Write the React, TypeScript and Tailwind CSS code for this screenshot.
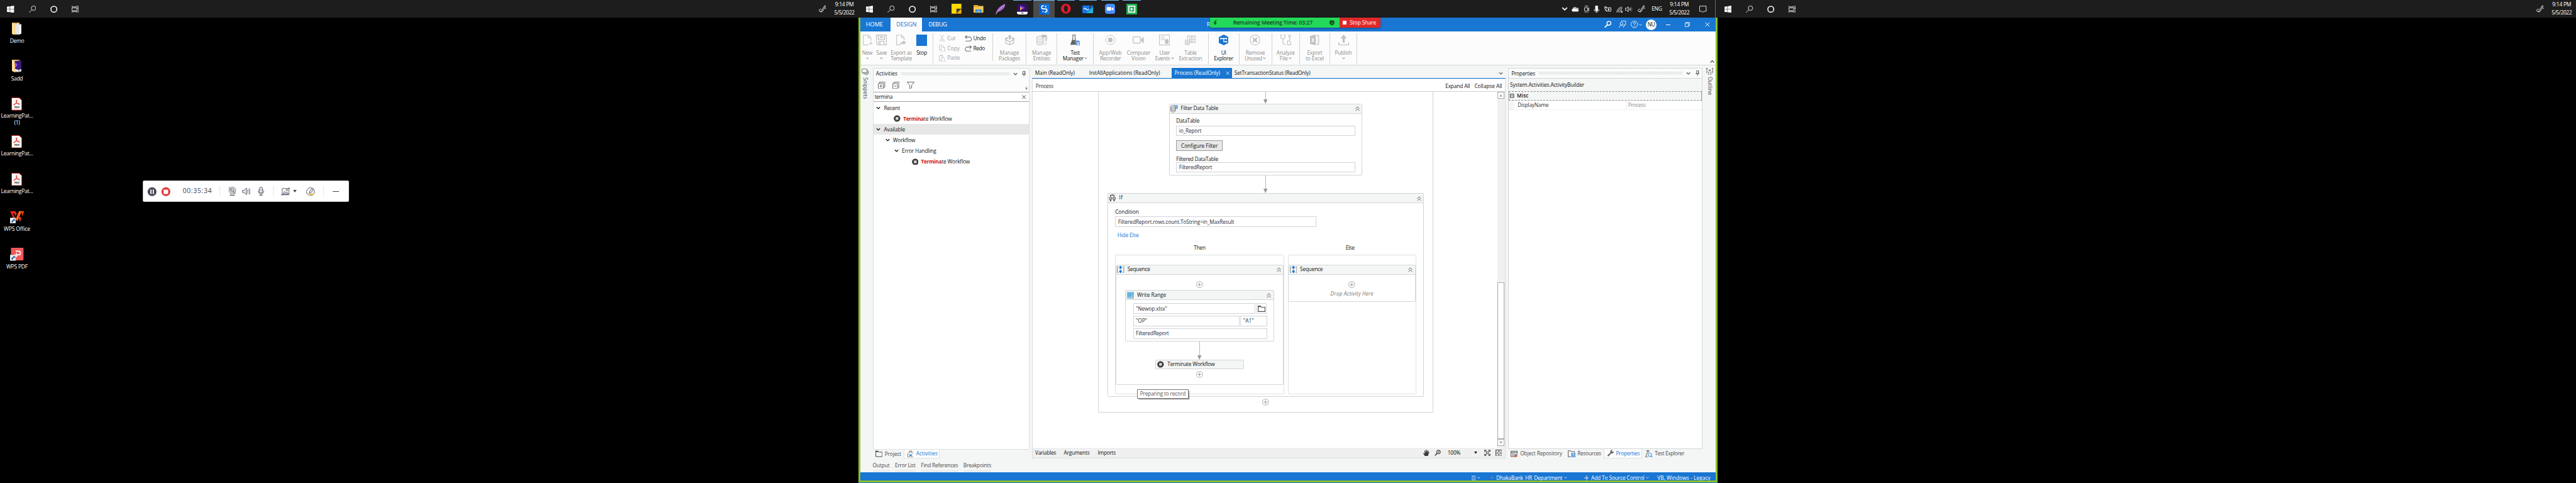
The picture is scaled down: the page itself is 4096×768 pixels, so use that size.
import React, { useLayoutEffect, useRef, useState } from "react";

type Kids = { children?: React.ReactNode };

/* Text line whose tracking is adjusted so that it spans `w` pixels. */
function Label({ w, className = "", children }: { w: number; className?: string; children: string }) {
  const ref = useRef<HTMLSpanElement>(null);
  const [spacing, setSpacing] = useState(0);
  useLayoutEffect(() => {
    const el = ref.current;
    const ctx = document.createElement("canvas").getContext("2d");
    if (!el || !ctx) return;
    const cs = getComputedStyle(el);
    ctx.font = `${cs.fontStyle} ${cs.fontWeight} ${cs.fontSize} ${cs.fontFamily}`;
    setSpacing((w - ctx.measureText(children).width) / children.length);
  }, [w, children]);
  return (
    <span ref={ref} className={`block shrink-0 whitespace-nowrap ${className}`} style={{ letterSpacing: `${spacing}px`, width: `${w}px` }}>
      {children}
    </span>
  );
}

function Icon({ w = 16, h = 16, box, className = "", children }: Kids & { w?: number; h?: number; box?: string; className?: string }) {
  return (
    <svg width={w} height={h} viewBox={box ?? `0 0 ${w} ${h}`} fill="none" stroke="currentColor" strokeWidth="1.2" className={`block shrink-0 ${className}`}>
      {children}
    </svg>
  );
}

const Chevron = ({ className = "", s = 8 }: { className?: string; s?: number }) => (
  <Icon w={s} h={s} box="0 0 8 8" className={className}>
    <path d="M1 2.5l3 3 3-3" strokeWidth="1.4" />
  </Icon>
);

const Close = ({ s = 10, className = "" }: { s?: number; className?: string }) => (
  <Icon w={s} h={s} box="0 0 10 10" className={className}>
    <path d="M.7.7l8.6 8.6M9.3.7L.7 9.3" />
  </Icon>
);

/* ---------- Taskbars ---------- */

function SystemButtons() {
  return (
    <div className="flex shrink-0 items-center gap-8 pl-4 text-white">
      <Icon>
        <path d="M0 2.3L6.5 1.4V7.6H0zM7.3 1.3L16 0V7.6H7.3zM0 8.4H6.5V14.6L0 13.7zM7.3 8.4H16V16L7.3 14.7z" fill="currentColor" stroke="none" />
      </Icon>
      <Icon>
        <circle cx="10.3" cy="5.6" r="5" />
        <path d="M6.6 9.2L.4 15.5" />
      </Icon>
      <Icon>
        <circle cx="8" cy="8" r="6.6" strokeWidth="2.2" />
      </Icon>
      <Icon>
        <path d="M.6.3v2.3h10.8V.3M.6 15.7v-2.3h10.8v2.3M.6 5h10.8v6H.6zM14.3 0v2.5M14.3 8v7.6" />
        <rect x="13" y="3.8" width="2.8" height="2.8" fill="currentColor" stroke="none" />
      </Icon>
    </div>
  );
}

const PenIcon = () => (
  <Icon w={17} h={17} className="text-white">
    <path d="M5.5 13.5L13 1.6c1-1 2.4 0 1.900 1.200L8.300 14.200l-3 1.600zM1 13c-.6-3 2-4 4.500-4M1 13c.5 2 3 2.400 4.300 1M13.500 7c2-.5 2.500 0 2.500 1.500" />
  </Icon>
);

function Clock() {
  return (
    <div className="flex w-[48px] shrink-0 flex-col items-center text-[12px] leading-[18px] text-white">
      <Label w={42}>9:14 PM</Label>
      <Label w={45}>5/5/2022</Label>
    </div>
  );
}

function SideTaskbar() {
  return (
    <div className="flex h-[40px] items-center bg-[#1d1d1d]">
      <SystemButtons />
      <div className="ml-auto flex items-center gap-[16px] pr-[8px]">
        <PenIcon />
        <Clock />
      </div>
    </div>
  );
}

function TaskApp({ state = "idle", children }: Kids & { state?: "idle" | "open" | "active" }) {
  return (
    <div className={`relative flex h-[40px] w-[48px] shrink-0 items-center justify-center ${state === "active" ? "bg-[#4b4b4b]" : ""}`}>
      {state !== "idle" && <span className={`absolute top-0 h-[2px] bg-[#76b9ed] ${state === "active" ? "w-[48px]" : "w-[40px]"}`} />}
      {children}
    </div>
  );
}

function MainTaskbar() {
  return (
    <div className="flex h-[40px] items-center bg-[#1d1d1d] text-white">
      <SystemButtons />
      <div className="ml-[19px] flex gap-[1px]">
        <TaskApp>
          <Icon w={22} h={22} className="stroke-none">
            <path d="M0 0h22v11L11 22H0z" fill="#ffd800" />
            <path d="M11 22V11h11z" fill="#3f3a38" />
            <path d="M11 22L22 11v11z" fill="#f5b400" />
          </Icon>
        </TaskApp>
        <TaskApp>
          <Icon w={22} h={18} className="stroke-none">
            <path d="M0 0h9l2 2h11v15H0z" fill="#f7c653" />
            <path d="M0 0h9l2 2-2 2H0z" fill="#e5a323" />
            <path d="M4 18v-8h14v8h-4v-4H8v4z" fill="#3a96dd" />
          </Icon>
        </TaskApp>
        <TaskApp>
          <Icon w={22} h={24} className="stroke-none">
            <path d="M0 24C2 13 9 5 22 0c-1 8-4 14-18 18.500z" fill="#a566c9" />
            <path d="M1 23C6 15 12 8 21 1" stroke="#e2c6f2" strokeWidth="1" />
          </Icon>
        </TaskApp>
        <TaskApp state="open">
          <Icon w={24} h={24} className="stroke-none">
            <rect width="24" height="24" rx="5" fill="#33125e" />
            <path d="M0 18h24v1a5 5 0 01-5 5H5a5 5 0 01-5-5z" fill="#fff" />
            <path d="M7 3l11 6-11 6z" fill="#7b3cf5" />
            <path d="M7 7l5 3-5 5z" fill="#ffab3d" />
            <path d="M9 20l1.500 2 1.500-1 1.500 1 1.500-2z" fill="#222" />
          </Icon>
        </TaskApp>
        <TaskApp state="active">
          <Icon w={24} h={24} className="stroke-none">
            <rect width="24" height="24" fill="#0b74de" />
            <path d="M0 0h12v24H0z" fill="#0a62cc" />
            <path d="M11 4.500H9.500a3.500 3.500 0 000 7h5a3.500 3.500 0 010 7H13M15 4.500v3.500M9 16v3" stroke="#fff" strokeWidth="2.400" />
          </Icon>
        </TaskApp>
        <TaskApp state="open">
          <Icon w={22} h={22} className="stroke-none">
            <path fillRule="evenodd" d="M11 0a11 11 0 100 22 11 11 0 000-22zm0 3.500c2.600 0 4.200 3.200 4.200 7.500s-1.600 7.500-4.200 7.500S6.800 15.300 6.800 11 8.400 3.500 11 3.500z" fill="#e8182c" />
          </Icon>
        </TaskApp>
        <TaskApp state="open">
          <Icon w={24} h={24} className="stroke-none">
            <rect y="4" width="24" height="17" rx="1" fill="#1474e8" />
            <path d="M24 8v12a1 1 0 01-1 1H8z" fill="#1fb3d8" />
            <path d="M3 13c2-4 4-4 5.500-1s3.500 2 6-1" stroke="#fff" strokeWidth="1.800" />
            <path d="M14 11L20 1l3 1-6 9z" fill="#333" />
          </Icon>
        </TaskApp>
        <TaskApp state="open">
          <Icon w={23} h={23} className="stroke-none">
            <rect width="23" height="23" rx="6" fill="#4a8cff" />
            <rect x="4" y="7.500" width="10" height="8" rx="2" fill="#fff" />
            <path d="M15 10.500l4-3v8l-4-3z" fill="#fff" />
          </Icon>
        </TaskApp>
        <TaskApp state="open">
          <Icon w={24} h={24} className="stroke-none">
            <rect width="24" height="24" fill="#1eaf51" />
            <rect x="4" y="4" width="16" height="16" fill="#fff" />
            <rect x="6.500" y="6.500" width="11" height="11" fill="#1eaf51" />
            <path d="M9.500 8l6 4-6 4z" fill="#fff" />
          </Icon>
        </TaskApp>
      </div>
      <div className="ml-auto flex items-center">
        <Chevron s={14} />
        <Icon className="ml-[9px] stroke-none">
          <path d="M2 13a3.300 3.300 0 010-6 5 5 0 019-2 4 4 0 013 8z" fill="#bdbdbd" />
          <path d="M2.500 13a3 3 0 01.500-5.500c3-2 5 0 6 1 2-1 5 0 6 1.500 1 1.700 0 3-1.500 3z" fill="#fff" />
        </Icon>
        <Icon className="ml-[9px]">
          <rect x="3.500" y="4.500" width="7" height="7.500" rx="1" />
          <path d="M10.500 7l2.500-2v7l-2.500-2M4 1.500c2-1 6-1 8 0M4 14.800c2 1 6 1 8 0" />
        </Icon>
        <Icon className="ml-[7px]">
          <rect x="5" y="0" width="6" height="11.500" rx="1" fill="currentColor" stroke="none" />
          <path d="M3 8v2.500c0 3 10 3 10 0V8M8 13v3M5.500 15.500h5" />
        </Icon>
        <Icon className="ml-[9px]">
          <path d="M4 4.600h10.500v7.800H5v-3M14.500 7h1.300v3h-1.300M.5 3.500h4v3L2.500 8 .5 6.500zM1.500 1.500v2M3.500 1.500v2M2.500 8v3H5" />
          <rect x="8" y="6.500" width="3" height="4" fill="currentColor" stroke="none" />
        </Icon>
        <Icon className="ml-[9px]">
          <path d="M2.500 15A13 13 0 0114.500 3M5.500 15a10 10 0 019-9M8.500 15a7 7 0 016-6M11.500 15a4 4 0 013-3" />
          <circle cx="14" cy="14" r="1.500" fill="currentColor" stroke="none" />
        </Icon>
        <Icon className="ml-[6px]">
          <path d="M.6 5.700h2.600L7 2.500v11L3.200 10.300H.6zM9 6c1 1 1 3 0 4M11 4.300c2 2 2 5.400 0 7.400" />
          <path d="M13 2.500c3 3 3 8 0 11" className="text-[#777]" />
        </Icon>
        <div className="ml-[12px]">
          <PenIcon />
        </div>
        <Label w={23} className="ml-[14px] text-[12px]">ENG</Label>
        <div className="ml-[15px]">
          <Clock />
        </div>
        <Icon className="ml-[21px] mr-[19px]">
          <path d="M.6 1h14.800v11.500H10l-2.500 2.500-2.500-2.500H.6z" />
        </Icon>
      </div>
      <div className="h-[40px] w-[1px] bg-[#6b6b6b]" />
      <div className="h-[40px] w-[4px]" />
    </div>
  );
}

/* ---------- Desktop ---------- */

function Shortcut({ w, lines, children }: Kids & { w: number; lines: string[] }) {
  return (
    <div className="flex h-[84.200px] flex-col items-center">
      <div className="flex h-[34px] items-center">{children}</div>
      <div className="mt-[3px] flex flex-col items-center text-[12px] leading-[15px] text-white">
        <Label w={w}>{lines[0]}</Label>
        {lines[1] && <Label w={13}>{lines[1]}</Label>}
      </div>
    </div>
  );
}

const Folder = ({ dark = false }: { dark?: boolean }) => (
  <Icon w={22} h={28} className="stroke-none">
    <path d="M0 0h17v26l-10 2-7-3z" fill="#e3bf6a" />
    {dark ? (
      <>
        <path d="M6 3l15-2v21l-6 6-9-5z" fill="#3b1c78" />
        <path d="M7 6l6 5-6 8z" fill="#8a4dff" />
        <path d="M6 20l9 3v5l-9-4zM16 22l5-1v5l-5 1z" fill="#f3f3f3" />
        <path d="M5 9l2 1v12l-2-2z" fill="#f39b3b" />
      </>
    ) : (
      <>
        <path d="M7 4l8-2v25l-8-2z" fill="#e6e6e6" />
        <path d="M14 5l7-2v22l-7 2z" fill="#f5f5f5" />
        <path d="M14.500 5v22" stroke="#bbb" strokeWidth=".7" />
      </>
    )}
    <path d="M0 0l6 4v23.500L0 25z" fill="#ffe09a" />
  </Icon>
);

const Pdf = () => (
  <div className="relative flex h-[29px] w-[24px] justify-center">
    <Icon w={24} h={29}>
      <path d="M2 .7h15.500L23.300 6v21a1.300 1.300 0 01-1.300 1.300H2A1.300 1.300 0 01.7 27V2A1.300 1.300 0 012 .7z" fill="#f8f8f8" stroke="#e2231a" strokeWidth="1.400" />
      <path d="M11.500 5.500c2 0 .5 5-1.500 8s-5 4.500-4.500 2.500 6-3 9-3 5 1.500 4 2.500-4-.5-5.500-2.500-3.500-7.500-1.500-7.500z" stroke="#e2231a" strokeWidth="1.300" />
    </Icon>
    <span className="absolute bottom-[2px] text-[6px] leading-[8px] font-bold text-[#222]">PDF</span>
  </div>
);

const LinkArrow = () => (
  <>
    <rect x="0" y="16" width="12.500" height="12.500" fill="#f4f4f4" stroke="#bbb" strokeWidth=".6" />
    <path d="M3 26c0-4 1.500-5 4-5.300V18.500h4v4.500l-1-1c-3 1-4 2-3.500 5z" fill="#2b62a8" />
  </>
);

function Desktop() {
  return (
    <div className="flex w-[76px] flex-col pt-[7px]">
      <Shortcut w={32} lines={["Demo"]}><Folder /></Shortcut>
      <Shortcut w={26} lines={["Sadd"]}><Folder dark /></Shortcut>
      <Shortcut w={72} lines={["LearningPat...", "(1)"]}><Pdf /></Shortcut>
      <Shortcut w={72} lines={["LearningPat..."]}><Pdf /></Shortcut>
      <Shortcut w={72} lines={["LearningPat..."]}><Pdf /></Shortcut>
      <Shortcut w={59} lines={["WPS Office"]}>
        <Icon w={32} h={29} className="stroke-none">
          <path d="M0 1h12l3 6-3 5-3-6H6l7 14-2 5z" fill="#e8261c" />
          <path d="M12 20L20 1h6l-9 22z" fill="#ff6a2b" />
          <path d="M17 8l8 9 2-5-2-11h7L22 25z" fill="#f23a14" />
          <LinkArrow />
        </Icon>
      </Shortcut>
      <Shortcut w={48} lines={["WPS PDF"]}>
        <Icon w={32} h={30} className="stroke-none">
          <rect x="2" width="28" height="28" rx="1.500" fill="#ee5a5a" />
          <path d="M14 9v-1.500h5a3.500 3.500 0 010 8.500h-9M14.500 12v9" stroke="#fff" strokeWidth="2.400" />
          <LinkArrow />
        </Icon>
      </Shortcut>
    </div>
  );
}

function RecorderBar() {
  const sep = "h-[24px] w-[1px] shrink-0 bg-[#e6e6ea]";
  return (
    <div className="mt-[364px] ml-[243px] flex h-[48px] w-[462px] items-center rounded-[3px] border border-[#c9c9d4] bg-white pl-[8px] text-[#44454f]">
      <Icon w={22} h={22} className="stroke-none">
        <circle cx="11" cy="11" r="10.300" fill="#44454f" stroke="#dfe1ee" strokeWidth="1.200" />
        <path d="M7 6h2.600v10H7zM12.400 6H15v10h-2.600z" fill="#fff" />
      </Icon>
      <Icon w={22} h={22} className="ml-[10px] stroke-none">
        <circle cx="11" cy="11" r="10.300" fill="#e03434" stroke="#dfe1ee" strokeWidth="1.200" />
        <rect x="6" y="6.500" width="10" height="9.500" rx="1" fill="#fff" />
      </Icon>
      <Label w={66} className="ml-[26px] text-[15px]">00:35:34</Label>
      <div className={`ml-[16px] ${sep}`} />
      <Icon w={18} h={20} className="ml-[19px]">
        <circle cx="9" cy="8" r="7.300" />
        <circle cx="9" cy="8" r="4" fill="#e4e7f3" />
        <path d="M1 1l16 15M5.500 16v3h7v-3M3.500 19h11" />
      </Icon>
      <Icon w={19} h={18} className="ml-[13px]">
        <path d="M1 6.500h3.500L10 1.500v15L4.500 11.500H1z" fill="#e4e7f3" />
        <path d="M12 6c1.500 2 1.500 4 0 6M14 3.500c3 3 3 8 0 11M16 2c3.500 4 3.500 10 0 14" />
      </Icon>
      <Icon w={14} h={20} className="ml-[16px]">
        <rect x="3" y="1" width="8" height="13" rx="4" fill="#e4e7f3" />
        <path d="M.7 9c0 9.500 12.600 9.500 12.600 0M7 16v3M3 19h8M3 7h3M8 7h3" />
      </Icon>
      <div className={`ml-[20px] ${sep}`} />
      <Icon w={20} h={18} className="ml-[18px]">
        <path d="M0 16.500h17.500V0M20 2.500H2.500V18" />
        <path d="M4 15l4-6 3 3.500 2-2 3 4.500z" fill="#e4e7f3" />
        <circle cx="13" cy="6" r="1.800" />
      </Icon>
      <Icon w={8} h={6} className="ml-[6px] stroke-none">
        <path d="M0 0h8L4 5.500z" fill="currentColor" />
      </Icon>
      <Icon w={19} h={19} className="ml-[22px]">
        <circle cx="9.500" cy="9.500" r="8.800" />
        <path d="M8 15.500h9" stroke="#f5a800" strokeWidth="2.400" />
        <path d="M6.500 14l1-5 5-6.500 3.500 2.500-5 6.500z" fill="#e4e7f3" />
      </Icon>
      <div className={`ml-[18px] ${sep}`} />
      <div className="ml-[21px] h-[1px] w-[14px] bg-[#44454f]" />
    </div>
  );
}

/* ---------- Ribbon ---------- */

const Divider = ({ short = false, className = "" }: { short?: boolean; className?: string }) => (
  <div className={`mt-[4px] w-[1px] shrink-0 bg-[#d4d4d4] ${short ? "h-[63px]" : "h-[69px]"} ${className}`} />
);

type Line = [string, number];
function RibbonItem({ width, icon, a, b, arrow, on = false }: { width: string; icon: React.ReactNode; a: Line; b?: Line; arrow?: boolean; on?: boolean }) {
  return (
    <div className={`flex shrink-0 flex-col items-center pt-[8px] ${width} ${on ? "text-[#111]" : "text-[#8c8c8c]"}`}>
      <div className={`flex h-[24px] items-center justify-center ${on ? "text-[#666]" : "text-[#c2c2c2]"}`}>{icon}</div>
      <div className="mt-[9px] flex flex-col items-center leading-[13px]">
        <Label w={a[1]}>{a[0]}</Label>
        <div className="flex h-[13px] items-center gap-[2px]">
          {b && <Label w={b[1]}>{b[0]}</Label>}
          {arrow && <Chevron s={7} className="text-[#555]" />}
        </div>
      </div>
    </div>
  );
}

function EditRow({ icon, text, w, on = false }: { icon: React.ReactNode; text: string; w: number; on?: boolean }) {
  return (
    <div className={`flex h-[22px] items-center ${on ? "text-[#111]" : "text-[#9a9a9a]"}`}>
      <span className={`flex w-[19px] ${on ? "text-[#6e6e6e]" : "text-[#c2c2c2]"}`}>{icon}</span>
      <Label w={w}>{text}</Label>
    </div>
  );
}

function Ribbon() {
  return (
    <div className="flex h-[76px] border-b border-[#d6d6d6] bg-[#fcfcfc]">
      <RibbonItem width="w-[30px]" a={["New", 23]} arrow icon={
        <Icon w={24} h={24} className="ml-[3px]"><path d="M18 14V7l-6-6H1v22h12M12 1v6h6M18 16v7M14.500 19.500h7" strokeWidth="1.500" /></Icon>} />
      <RibbonItem width="w-[34px]" a={["Save", 24]} arrow icon={
        <Icon w={24} h={24}><path d="M1 1h22v22H4l-3-3zM5 1v10h14V1M6 23v-8h12v8M8 4h8M8 7h8M9 17v5" strokeWidth="1.700" /></Icon>} />
      <RibbonItem width="w-[54px]" a={["Export as", 47]} b={["Template", 47]} icon={
        <Icon w={23} h={24}><path d="M18 12V7l-6-6H1v22h9M12 1v6h6" strokeWidth="1.500" /><path d="M9 23c0-5 3-7 7-7v-3l6 5-6 5v-3c-3 0-5 .5-7 3z" fill="currentColor" stroke="none" /></Icon>} />
      <RibbonItem width="w-[38px]" on a={["Stop", 24]} icon={<div className="size-[24px] bg-[#1976d2]" />} />
      <Divider className="ml-[5px]" />
      <div className="ml-[13px] w-[58px] pt-[5px]">
        <EditRow text="Cut" w={18} icon={<Icon w={14} h={16}><path d="M3 0l7 12M11 0L4 12" /><circle cx="3.500" cy="13.500" r="1.800" /><circle cx="10.500" cy="13.500" r="1.800" /></Icon>} />
        <EditRow text="Copy" w={28} icon={<Icon w={14} h={16}><path d="M5 12H.7V.7h5L8 3M5 4h5l3.300 3v8.300H5zM10 4v3h3" /></Icon>} />
        <EditRow text="Paste" w={28} icon={<Icon w={14} h={16}><path d="M5 14H.7V2.700h9V6M3 3V1h4.500v2M5.500 6.700h5L13.300 9v6.300H5.500z" /></Icon>} />
      </div>
      <div className="w-[62px] pt-[5px]">
        <EditRow text="Undo" w={28} on icon={<Icon w={17} h={14}><path d="M5 .5L1 4l4 3.500M1 4h9.500a4.500 4.500 0 010 9H2" strokeWidth="1.500" /></Icon>} />
        <EditRow text="Redo" w={26} on icon={<Icon w={17} h={14}><path d="M11 .5L15 4l-4 3.500M15 4H5.500a4.500 4.500 0 000 9H14" strokeWidth="1.500" /></Icon>} />
      </div>
      <Divider short />
      <RibbonItem width="w-[74px]" a={["Manage", 43]} b={["Packages", 48]} icon={
        <Icon w={24} h={24}><path d="M12 0l4.500 5H14v6h-4V5H7.500zM2 7l7-1-3 5H1zM22 7l-7-1 3 5h5z" fill="currentColor" stroke="none" /><path d="M3 12v7l9 4 9-4v-7l-9 3.500zM12 15.500V23" strokeWidth="1.800" /></Icon>} />
      <Divider />
      <RibbonItem width="w-[68px]" a={["Manage", 43]} b={["Entities", 38]} icon={
        <Icon w={24} h={24}><ellipse cx="17" cy="3.500" rx="6" ry="3" fill="currentColor" /><ellipse cx="8" cy="7" rx="7" ry="3" strokeWidth="1.800" /><path d="M1 8v12c0 4 14 4 14 0V8M1 12c0 4 14 4 14 0M1 16c0 4 14 4 14 0M23 4v8c0 1-2 2-5 2.500M23 8c0 1-2 2-5 2.500M22 18c0 2-2 4-4 4" strokeWidth="1.600" /></Icon>} />
      <Divider />
      <RibbonItem width="w-[80px]" on a={["Test", 20]} b={["Manager", 47]} arrow icon={
        <Icon w={22} h={24}><path d="M4 1h8M5.500 1v8L1 21.500h11M10.500 1v8l3 7" strokeWidth="1.500" /><path d="M4.500 12h6.500l1.500 11H0z" fill="currentColor" stroke="none" /><path d="M13 16h8v7h-8zM15 16v-2h4v2M13 19h8" stroke="#1976d2" strokeWidth="1.300" fill="#fff" /></Icon>} />
      <Divider />
      <RibbonItem width="w-[76px]" a={["App/Web", 51]} b={["Recorder", 47]} icon={
        <Icon w={24} h={24}><circle cx="12" cy="12" r="10.500" strokeWidth="1.300" /><circle cx="12" cy="12" r="5.300" fill="currentColor" stroke="none" /></Icon>} />
      <RibbonItem width="w-[50px]" a={["Computer", 53]} b={["Vision", 32]} icon={
        <Icon w={26} h={24}><rect x="1" y="5" width="16" height="14" rx="1" strokeWidth="1.800" /><path d="M18 12l6-6v13z" fill="currentColor" /></Icon>} />
      <RibbonItem width="w-[66px]" a={["User", 23]} b={["Events", 33]} arrow icon={
        <Icon w={24} h={24}><rect x=".8" y=".8" width="22.400" height="22.400" strokeWidth="1.600" /><path d="M4 5h8M4 8h8M4 11h8" strokeDasharray="2 1" strokeWidth="1.600" /><rect x="13" y="10" width="8" height="11" rx="4" fill="currentColor" stroke="none" /></Icon>} />
      <RibbonItem width="w-[50px]" a={["Table", 27]} b={["Extraction", 52]} icon={
        <Icon w={24} h={22}><path d="M6 9V2h17v14H12" strokeWidth="1.600" /><circle cx="15" cy="9" r="5" /><path d="M10 9h10M15 4v10" /><path d="M1 11h10v10H1zM1 14.500h10M1 18h10M6 11v10" strokeWidth="1.400" /></Icon>} />
      <Divider className="ml-[14px]" />
      <RibbonItem width="w-[68px]" on a={["UI", 11]} b={["Explorer", 43]} icon={
        <Icon w={22} h={24} className="stroke-none"><path d="M11 0l11 5.500v13L11 24 0 18.500v-13z" fill="#1976d2" /><path d="M4 9h6M11 9v7h5M11 9h5" stroke="#fff" strokeWidth="1.600" /><path d="M3 7.500h3v3H3zM9.500 7.500h3v3h-3zM15.500 7.500h3v3h-3zM15.500 14.500h3v3h-3z" fill="#fff" /></Icon>} />
      <Divider />
      <RibbonItem width="w-[72px]" a={["Remove", 43]} b={["Unused", 39]} arrow icon={
        <Icon w={24} h={24}><circle cx="12" cy="12" r="11" strokeWidth="1.600" /><path d="M7.500 7.500l9 9M16.500 7.500l-9 9" strokeWidth="3.600" /></Icon>} />
      <Divider />
      <RibbonItem width="w-[62px]" a={["Analyze", 41]} b={["File", 18]} arrow icon={
        <Icon w={24} h={24}><path d="M3 1H1v4c0 6 9 6 9 0V1H8M5.500 10v7c0 3 2 5 6 5" strokeWidth="1.700" /><circle cx="20.500" cy="3.500" r="2.500" strokeWidth="1.600" /><path d="M20.500 6v7M16 23v-9h4l3 3v6z" strokeWidth="1.600" /></Icon>} />
      <Divider />
      <RibbonItem width="w-[66px]" a={["Export", 34]} b={["to Excel", 41]} icon={
        <Icon w={21} h={24}><path d="M0 3L13 0v24L0 21z" fill="currentColor" stroke="none" /><path d="M15 2h4v20h-4" strokeWidth="2" /><path d="M4 8l5 9M9 8l-5 9" stroke="#fff" strokeWidth="1.600" /></Icon>} />
      <Divider />
      <RibbonItem width="w-[60px]" a={["Publish", 38]} arrow icon={
        <Icon w={24} h={24}><path d="M12 0l7 8.500h-4.500V18h-5V8.500H5z" fill="currentColor" stroke="none" /><path d="M1 17v6h22v-6" strokeWidth="2" /></Icon>} />
      <Divider />
      <Icon w={10} h={8} className="mt-[64px] mr-[2px] ml-auto text-[#333]"><path d="M1 6.500l4-4.500 4 4.500" strokeWidth="1.500" /></Icon>
    </div>
  );
}

function TitleBar() {
  return (
    <div className="relative flex h-[30px] items-center bg-[#1976d2] text-[13px] text-white">
      <Label w={38} className="ml-[12px]">HOME</Label>
      <div className="ml-[17px] flex h-[30px] w-[71px] items-center justify-center bg-[#fcfcfc] text-[#1976d2]">
        <Label w={45}>DESIGN</Label>
      </div>
      <Label w={41} className="ml-[14px]">DEBUG</Label>
      <span className="ml-[581px] text-[12px]">Ro</span>
      <div className="ml-auto flex items-center">
        <Icon className=""><circle cx="10.300" cy="5.500" r="4.300" strokeWidth="2" /><path d="M7 9L1 15" strokeWidth="2.600" /></Icon>
        <Icon className="ml-[17px]"><path d="M5 .7h10.300v8H13v3l-2.500-3" /><circle cx="6" cy="6.500" r="3" /><path d="M.7 15.500c0-7.500 10-7.500 10.300 0" /></Icon>
        <Icon className="ml-[11px]"><circle cx="8" cy="8" r="7.300" /><path d="M5.800 6.300c0-3 4.400-3 4.400-.3 0 1.800-2.200 1.700-2.200 3.500M8 11v1.500" strokeWidth="1.400" /></Icon>
        <Chevron s={7} className="ml-[2px]" />
        <div className="ml-[8px] flex size-[24px] items-center justify-center rounded-full bg-[#f4f6f6] text-[12px] text-[#222]">
          <Label w={16}>NU</Label>
        </div>
        <div className="ml-[21px] h-[1px] w-[10px] bg-white" />
        <Icon w={11} h={11} className="ml-[33px]"><path d="M.6 2.700h7.600v7.600H.6zM2.700 2.700V.6h7.700v7.700H8.200" /></Icon>
        <Close s={11} className="mr-[12px] ml-[34px]" />
      </div>
      <div className="absolute top-0 left-[782px] flex h-[22px] w-[380px] overflow-hidden rounded-b-[3px] text-[12px] shadow-[0_1px_4px_rgba(0,0,0,0.4)]">
        <div className="flex w-[289px] items-center bg-[#23d959] text-[#0f4a22]">
          <Icon w={10} h={11} className="ml-[6px] stroke-none"><path d="M9.500 0C3 0 2.500 3 2.700 6H.3l4 5 4-5H6c-.3-3 .5-5 3.500-6z" fill="#0c5c1e" /></Icon>
          <Label w={178} className="ml-[35px] font-semibold text-[#1f3a2a]">Remaining Meeting Time: 03:27</Label>
          <Icon w={11} h={12} className="ml-[38px]"><path d="M5.500 0L11 2v4c0 3-2.500 5-5.500 6C2.500 11 0 9 0 6V2z" fill="#14541f" stroke="none" /><path d="M3 6l2 2 3.500-4" stroke="#23d959" /></Icon>
        </div>
        <div className="flex w-[91px] items-center bg-[#e02828]">
          <div className="ml-[7px] size-[8px] bg-white" />
          <Label w={59} className="ml-[8px]">Stop Share</Label>
        </div>
      </div>
    </div>
  );
}

/* ---------- Side panels ---------- */

const Dots = ({ id, className }: { id: string; className: string }) => (
  <svg className={`block h-[7px] shrink-0 ${className}`}>
    <defs>
      <pattern id={id} width="4" height="4" patternUnits="userSpaceOnUse">
        <rect width="1.200" height="1.200" fill="#a9a9a9" />
        <rect x="2" y="2" width="1.200" height="1.200" fill="#a9a9a9" />
      </pattern>
    </defs>
    <rect width="100%" height="100%" fill={`url(#${id})`} />
  </svg>
);

const Pin = ({ className = "" }) => (
  <Icon w={9} h={12} className={`text-[#555] ${className}`}>
    <path d="M2 .7h5v6.500H2zM0 7.200h9M4.500 7.200V12M6 1v6" />
  </Icon>
);

const TerminateIcon = () => (
  <Icon w={15} h={15} className="stroke-none">
    <circle cx="7.500" cy="7.500" r="7.300" fill="#3c3c3c" />
    <rect x="4.500" y="4.500" width="6" height="6" rx=".5" fill="#d9d9d9" />
  </Icon>
);

function TreeRow({ pad, text, w, selected = false }: { pad: string; text: string; w: number; selected?: boolean }) {
  return (
    <div className={`flex h-[24px] items-center ${pad} ${selected ? "bg-[#e7e7e7]" : ""}`}>
      <Chevron s={10} className="mr-[7px]" />
      <Label w={w}>{text}</Label>
    </div>
  );
}

function TreeActivity({ pad }: { pad: string }) {
  return (
    <div className={`flex h-[24px] items-center ${pad}`}>
      <TerminateIcon />
      <Label w={46} className="ml-[6px] font-bold text-[#cf1b12]">Termina</Label>
      <Label w={63}>te Workflow</Label>
    </div>
  );
}

function ActivitiesPanel() {
  return (
    <div className="mt-[6px] flex w-[351px] shrink-0 flex-col">
      <div className="flex h-[853px] flex-col border border-[#dcdfdf] bg-white">
        <div className="flex h-[23px] items-center bg-[#fafbfb]">
          <Label w={48} className="ml-[6px]">Activities</Label>
          <Dots id="dots-left" className="ml-[9px] w-[243px]" />
          <Chevron s={10} className="ml-[7px] text-[#555]" />
          <Pin className="ml-[9px]" />
        </div>
        <div className="flex h-[30px] items-center border-b border-[#a5a5a5] bg-[#fcfcfc] pl-[11px] text-[#6a6a6a]">
          <Icon><path d="M.7 4h11.500v11.300H.7zM3.500 3.500V.7h11.800V12h-2.500M6.500 6.500v6.500M3.300 9.700h6.500" strokeWidth="1.400" /></Icon>
          <Icon className="ml-[16px]"><path d="M.7 4h11.500v11.300H.7zM3.500 3.500V.7h11.800V12h-2.500M3.300 9.700h6.500" strokeWidth="1.400" /></Icon>
          <Icon w={17} className="ml-[16px]"><path d="M.7.700h15.600L10.500 8v5.500l-4 2V8z" strokeWidth="1.400" /></Icon>
          <Icon w={6} h={7} className="mt-[15px] mr-[3px] ml-auto"><path d="M0 1h6M1 3.500l2 2.500 2-2.500z" fill="currentColor" strokeWidth=".8" /></Icon>
        </div>
        <div className="flex h-[22px] items-center border-b border-[#a5a5a5]">
          <Label w={40} className="ml-[3px]">termina</Label>
          <Close s={9} className="mr-[6px] ml-auto" />
        </div>
        <div className="pt-[1px]">
          <TreeRow pad="pl-[7px]" text="Recent" w={36} />
          <TreeActivity pad="pl-[46px]" />
          <TreeRow pad="pl-[7px]" text="Available" w={47} selected />
          <TreeRow pad="pl-[27px]" text="Workflow" w={50} />
          <TreeRow pad="pl-[47px]" text="Error Handling" w={77} />
          <TreeActivity pad="pl-[86px]" />
        </div>
      </div>
      <div className="flex h-[20px] items-center text-[#4a4a4a]">
        <Icon h={15} className="ml-[6px]"><path d="M.8 14.200V2H6l1.500 2h7.700v10.200z" strokeWidth="1.400" /><path d="M0 1h6v3H0z" fill="currentColor" stroke="none" /></Icon>
        <Label w={37} className="ml-[5px]">Project</Label>
        <div className="ml-[6px] flex h-[20px] w-[80px] items-center border border-t-0 border-[#e0e2e2] bg-[#fcfcfc] text-[#1976d2]">
          <Icon w={14} h={16} className="ml-[6px]">
            <path d="M.8 15.200v-8l3-3h6.400l3 3v8zM4.500 4V1.500h5V4" stroke="#666" />
            <path d="M4 9l2 1.500h2L10 9M4 13l2-1.500h2l2 1.500" strokeWidth="1.500" />
          </Icon>
          <Label w={48} className="ml-[6px]">Activities</Label>
        </div>
      </div>
      <div className="mt-[6px] flex gap-[12px] text-[#4a4a4a]">
        {([["Output", 38], ["Error List", 46], ["Find References", 83], ["Breakpoints", 62]] as Line[]).map(([t, w]) => (
          <div key={t} className="flex h-[25px] flex-col justify-between pt-[1px]">
            <Label w={w} className="leading-[17px]">{t}</Label>
            <div className="h-[6px] bg-[#ebecee]" />
          </div>
        ))}
      </div>
    </div>
  );
}

function PropertiesPanel() {
  return (
    <div className="mt-[6px] ml-[6px] flex w-[434px] shrink-0 flex-col">
      <div className="flex h-[852px] flex-col border border-[#d3d6d6] bg-white">
        <div className="flex h-[23px] items-center border-b border-[#d3d6d6] bg-[#fafbfb]">
          <Label w={53} className="ml-[6px]">Properties</Label>
          <Dots id="dots-right" className="ml-[9px] w-[321px]" />
          <Chevron s={10} className="ml-[8px] text-[#555]" />
          <Pin className="ml-[10px]" />
        </div>
        <div className="flex h-[28px] items-center bg-[#f4f6f6] pl-[3px]">
          <Label w={166}>System.Activities.ActivityBuilder</Label>
        </div>
        <div className="flex h-[20px] items-center border border-dashed border-[#8a8a8a] bg-[#f4f6f6] pl-[2px]">
          <Icon w={9} h={9}><path d="M.6.600h7.800v7.800H.6zM2.500 4.500h4" /></Icon>
          <Label w={26} className="ml-[6px] font-semibold">Misc</Label>
        </div>
        <div className="flex h-[22px] border-b border-[#f0f1f1]">
          <div className="w-[13px] bg-[#f4f6f6]" />
          <div className="flex w-[251px] items-center border-r border-[#eceeee] pl-[7px]">
            <Label w={69} className="text-[#333]">DisplayName</Label>
          </div>
          <Label w={39} className="ml-[3px] self-center text-[#8d8d8d]">Process</Label>
        </div>
      </div>
      <div className="flex h-[21px] items-center text-[#4a4a4a]">
        <Icon w={16} h={16} className="ml-[6px]"><path d="M.7 2h14v3H.7zM.7 5v9H9M14.700 5v3" strokeWidth="1.400" /><path d="M3 8h5M3 11h4" /><path d="M11 8l4 2v4l-4 2-3-2v-4z" fill="#e06a2c" stroke="none" /><path d="M11 8l4 2-3 2-4-2z" fill="#3d8fdc" stroke="none" /></Icon>
        <Label w={94} className="ml-[5px]">Object Repository</Label>
        <Icon w={17} h={16} className="ml-[12px]"><path d="M6 14.500H.7V1h5l1.500 2H15v3" strokeWidth="1.300" /><path d="M8 7h3v3H8zM13 7h3v3h-3zM8 12h3v3H8zM13 12h3v3h-3z" stroke="#1976d2" strokeWidth="1.300" /></Icon>
        <Label w={53} className="ml-[5px]">Resources</Label>
        <div className="ml-[6px] flex h-[21px] w-[86px] items-center border border-t-0 border-[#e0e2e2] bg-[#fcfcfc] text-[#1976d2]">
          <Icon w={16} h={16} className="ml-[5px] stroke-none"><path d="M1 13l7-7c-1-3 1-6 4.500-6L11 3l2 2 3-1.500c0 4-3 5.500-6 4.500l-7 7.500z" fill="#666" /></Icon>
          <Label w={53} className="ml-[5px]">Properties</Label>
        </div>
        <Icon w={16} h={16} className="ml-[7px]"><path d="M3 .700h6M4.500 1v5L.7 15.300H7M7.500 1v4" strokeWidth="1.300" /><circle cx="10.500" cy="10" r="3.800" stroke="#1976d2" /><path d="M13 13l2.500 2.500" stroke="#1976d2" strokeWidth="1.600" /></Icon>
        <Label w={66} className="ml-[5px]">Test Explorer</Label>
      </div>
    </div>
  );
}

/* ---------- Designer ---------- */

const FoldIcon = () => (
  <Icon w={10} h={11} className="text-[#3f4550]">
    <path d="M.7 5.500L5 1l4.300 4.500M.7 10.300L5 5.800l4.300 4.500" />
  </Icon>
);

const Plus = ({ className = "" }) => (
  <Icon w={15} h={15} className={`text-[#8a8a8a] ${className}`}>
    <circle cx="7.500" cy="7.500" r="6.900" strokeWidth="1" />
    <path d="M3.500 7.500h8M7.500 3.500v8" />
  </Icon>
);

function Arrow({ className }: { className: string }) {
  return (
    <div className={`flex shrink-0 flex-col items-center ${className}`}>
      <div className="w-[1.500px] flex-1 bg-[#b9b9b9]" />
      <Icon w={9} h={10} className="stroke-none"><path d="M0 0h9L4.500 10z" fill="#979797" /></Icon>
    </div>
  );
}

function Card({ className, icon, title, w, children }: Kids & { className: string; icon: React.ReactNode; title: string; w: number }) {
  return (
    <div className={`flex shrink-0 flex-col rounded-[2px] border border-[#d2d4d6] bg-white ${className}`}>
      <div className="flex h-[21px] shrink-0 items-center border-b border-[#d2d4d6] bg-[#f4f6f6] pr-[5px] pl-[2px]">
        <span className="w-[23px]">{icon}</span>
        <Label w={w} className="mb-[2px]">{title}</Label>
        <span className="mt-[1px] ml-auto"><FoldIcon /></span>
      </div>
      {children}
    </div>
  );
}

const Field = ({ className, text, w }: { className: string; text: string; w: number }) => (
  <div className={`flex shrink-0 items-center border-[1.500px] border-[#d3d3da] bg-white pl-[5px] text-[#2a2d3a] ${className}`}>
    <Label w={w}>{text}</Label>
  </div>
);

const SequenceIcon = () => (
  <Icon>
    <path d="M3 1.500H.8v13H3M13 1.500h2.200v13H13" stroke="#777" />
    <path d="M6 0h4v3h2L8 7 4 3h2zM6 9h4v3h2l-4 4-4-4h2z" fill="#1976d2" stroke="none" />
  </Icon>
);

function FilterCard() {
  const icon = (
    <Icon w={17} h={16}>
      <path d="M8 1h8v7H9M8 3.500h8M8 6h8M10.500 1v7M13.500 1v7" stroke="#4a98d8" />
      <path d="M1 4v9.500c0 2.500 10 2.500 10 0V4M1 7.500c0 2 10 2 10 0M1 10.500c0 2 10 2 10 0" fill="#fff" stroke="#555" />
      <ellipse cx="6" cy="3.500" rx="5" ry="2" fill="#fff" stroke="#555" />
    </Icon>
  );
  return (
    <Card className="h-[160px] w-[433px]" icon={icon} title="Filter Data Table" w={84}>
      <div className="flex flex-col px-[15px] pt-[9px]">
        <Label w={52} className="leading-[14px]">DataTable</Label>
        <Field className="mt-[4px] h-[23px] w-[400px]" text="io_Report" w={50} />
        <div className="mt-[10px] flex h-[23px] w-[104px] items-center justify-center border border-[#9a9a9a] bg-[#e8e8e8]">
          <Label w={82}>Configure Filter</Label>
        </div>
        <Label w={94} className="mt-[11px] leading-[14px]">Filtered DataTable</Label>
        <Field className="h-[23px] w-[400px]" text="FilteredReport" w={74} />
      </div>
    </Card>
  );
}

function ThenBranch() {
  return (
    <div className="flex h-[311px] w-[378px] shrink-0 flex-col items-center rounded-[2px] border border-[#dfe0e2] pt-[20px]">
      <Card className="h-[269px] w-[376px] items-stretch" icon={<SequenceIcon />} title="Sequence" w={51}>
        <div className="flex flex-col items-center pt-[15px]">
          <Plus />
          <Card
            className="mt-[5px] h-[115px] w-[333px]"
            title="Write Range"
            w={65}
            icon={
              <Icon className="stroke-none">
                <rect width="16" height="15" rx="1" fill="#7cc4ea" />
                <path d="M1 4.500h14M1 9h11" stroke="#3f8fc4" strokeWidth="1.200" />
                <path d="M11 9h5v7h-5z" fill="#e9f4fb" />
                <path d="M12 10h3M13.500 10v5M12 15h3" stroke="#444" strokeWidth=".9" />
              </Icon>
            }
          >
            <div className="flex flex-col gap-[5px] px-[16px] pt-[7px]">
              <div className="flex gap-[3px]">
                <Field className="h-[23px] w-[274px]" text={'"Newop.xlsx"'} w={70} />
                <div className="flex h-[23px] w-[23px] items-center justify-center border border-[#d3d3e0] text-[#555]">
                  <Icon w={17} h={14}><path d="M.9 13.100V1.500H6l1.500 2h8.600v9.600z" strokeWidth="1.600" /><path d="M0 0h7v3H0z" fill="currentColor" stroke="none" /></Icon>
                </div>
              </div>
              <div className="flex gap-[2px]">
                <Field className="h-[23px] w-[238px]" text={'"OP"'} w={25} />
                <Field className="h-[23px] w-[60px]" text={'"A1"'} w={24} />
              </div>
              <Field className="h-[23px] w-[300px]" text="FilteredReport" w={74} />
            </div>
          </Card>
          <Arrow className="h-[40px]" />
          <div className="flex h-[22px] w-[199px] items-center rounded-[2px] border border-[#d2d4d6] bg-[#f4f6f6] pl-[3px]">
            <TerminateIcon />
            <Label w={106} className="mb-[2px] ml-[8px]">Terminate Workflow</Label>
          </div>
          <Plus className="mt-[4px]" />
        </div>
      </Card>
    </div>
  );
}

function IfCard() {
  const icon = (
    <Icon>
      <path d="M4 6V2h8v4M8 0v2" strokeWidth="1.800" stroke="#555" />
      <path d="M1.500 7h5v4h-5zM9.500 7h5v4h-5zM4 11v4M12 11v4" stroke="#555" strokeWidth="1.500" />
      <path d="M2 13h4l-2 3zM10 13h4l-2 3z" fill="#333" stroke="none" />
    </Icon>
  );
  return (
    <Card className="h-[456px] w-[708px]" icon={icon} title="If" w={8}>
      <div className="flex flex-col px-[16px] pt-[13px]">
        <Label w={53} className="leading-[14px]">Condition</Label>
        <Field className="mt-[3px] h-[24px] w-[450px]" text="FilteredReport.rows.count.ToString=in_MaxResult" w={260} />
        <Label w={48} className="mt-[10px] ml-[5px] leading-[14px] text-[#1976d2]">Hide Else</Label>
        <div className="mt-[15px] flex h-[14px] items-center">
          <div className="flex w-[378px] justify-center"><Label w={26}>Then</Label></div>
          <div className="flex w-[295px] justify-center"><Label w={20}>Else</Label></div>
        </div>
        <div className="mt-[9px] flex gap-[8px]">
          <ThenBranch />
          <div className="flex h-[311px] w-[287px] shrink-0 flex-col items-center rounded-[2px] border border-[#dfe0e2] pt-[20px]">
            <Card className="h-[83px] w-[285px]" icon={<SequenceIcon />} title="Sequence" w={51}>
              <div className="flex flex-col items-center pt-[15px]">
                <Plus />
                <Label w={96} className="mt-[6px] leading-[14px] text-[#777] italic">Drop Activity Here</Label>
              </div>
            </Card>
          </div>
        </div>
      </div>
    </Card>
  );
}

function ScrollButton({ down = false }: { down?: boolean }) {
  return (
    <div className="flex h-[15px] w-[15px] items-center justify-center border border-[#a9a9a9] bg-white">
      <Icon w={7} h={5} className={`stroke-none ${down ? "rotate-180" : ""}`}><path d="M0 5h7L3.500 0z" fill="#a0a0a0" /></Icon>
    </div>
  );
}

function DocumentArea() {
  return (
    <div className="mt-[6px] ml-[6px] flex w-[1058px] shrink-0 flex-col">
      <div className="flex h-[24px] items-center border-b-[2px] border-[#1976d2]">
        <Label w={89} className="ml-[6px]">Main (ReadOnly)</Label>
        <Label w={159} className="ml-[32px]">InitAllApplications (ReadOnly)</Label>
        <div className="ml-[26px] flex h-[22px] w-[134px] items-center self-start bg-[#1976d2] pl-[6px] text-white">
          <Label w={102}>Process (ReadOnly)</Label>
          <Close s={9} className="ml-[13px]" />
        </div>
        <Label w={170} className="ml-[6px]">SetTransactionStatus (ReadOnly)</Label>
        <Chevron s={10} className="mr-[5px] ml-auto text-[#666]" />
      </div>
      <div className="flex h-[29px] items-center border border-t-[#e4e6e6] border-r-[#dcdfdf] border-b-[#cfcfcf] border-l-[#dcdfdf] bg-white pt-[3px] pr-[6px] pl-[6px]">
        <Label w={40} className="text-[#333]">Process</Label>
        <Label w={55} className="ml-auto">Expand All</Label>
        <Label w={62} className="ml-[10px]">Collapse All</Label>
      </div>
      <div className="relative flex h-[797px] border-x border-[#dcdfdf] bg-white">
        <div className="ml-[146px] flex h-[717px] w-[749px] flex-col items-center border border-t-0 border-[#d2d4d6]">
          <Arrow className="h-[27px]" />
          <FilterCard />
          <Arrow className="h-[40px]" />
          <IfCard />
          <Plus className="mt-[4px]" />
        </div>
        <div className="ml-auto flex w-[17px] flex-col items-center bg-[#f0f0f0] pt-[1px] pb-[5px]">
          <ScrollButton />
          <div className="mt-auto mb-[1px] h-[349px] w-[15px] border border-[#a9a9a9] bg-white" />
          <ScrollButton down />
        </div>
        <div className="absolute top-[666px] left-[233px] flex h-[20px] w-[115px] items-center justify-center border border-[#767676] bg-white text-[#555] shadow-[3px_3px_2px_rgba(0,0,0,0.4)]">
          <Label w={102}>Preparing to record</Label>
        </div>
      </div>
      <div className="flex h-[23px] items-center border border-t-0 border-[#dcdfdf] bg-[#f0f0f0] pl-[5px]">
        <Label w={47}>Variables</Label>
        <Label w={58} className="ml-[17px]">Arguments</Label>
        <Label w={40} className="ml-[18px]">Imports</Label>
        <div className="ml-auto flex items-center pr-[6px] text-[#444]">
          <Icon w={14} h={15} className="stroke-none"><path d="M4 15L0 8l1.500-1L4 9 2.500 2l1.300-.4L5.500 6 6 0h1.500L8 6l1.800-5 1.300.4L10.300 7l2.200-3 1.200.6L11.500 11l-1 4z" fill="#3c3c3c" /></Icon>
          <Icon w={14} h={14} className="ml-[12px]"><circle cx="8.800" cy="5.200" r="4" strokeWidth="1.600" /><path d="M5.800 8.200L1 13" strokeWidth="2.400" /><path d="M7 5.200h3.600M8.800 3.400V7" /></Icon>
          <Label w={29} className="ml-[15px] text-black">100%</Label>
          <Icon w={7} h={5} className="ml-[30px] stroke-none"><path d="M0 0h7L3.500 5z" fill="#111" /></Icon>
          <Icon w={14} h={14} className="ml-[16px]"><path d="M1 5V1h4M9 1h4v4M13 9v4H9M5 13H1V9M1 1l4 4M13 1L9 5M13 13L9 9M1 13l4-4" strokeWidth="1.500" /><path d="M5 5h4v4H5z" /></Icon>
          <Icon w={15} h={15} className="ml-[11px]"><rect x=".7" y=".7" width="13.600" height="13.600" fill="#d8d8d8" strokeWidth="1.400" /><path d="M7.500 2.500v3M7.500 9.500v3M2.500 7.500h3M9.500 7.500h3" strokeWidth="1.800" /></Icon>
        </div>
      </div>
    </div>
  );
}

function StatusBar() {
  return (
    <div className="flex h-[18px] justify-end overflow-hidden bg-[#1976d2] text-white">
      <div className="mt-[4px] flex h-[17px] items-center leading-[17px]">
        <Icon w={9} h={12}><rect width="9" height="12" rx="1" fill="#6fa9e4" stroke="none" /><circle cx="4.500" cy="6" r="2.300" stroke="#1976d2" /></Icon>
        <Chevron s={7} className="ml-[4px]" />
        <div className="ml-[22px] size-[7px] rounded-full bg-[#4a7fb5]" />
        <Label w={148} className="ml-[6px]">DhakaBank_HR_Department</Label>
        <Chevron s={7} className="ml-[4px]" />
        <Icon w={11} h={11} className="ml-[37px]"><path d="M5.500 0v11M0 5.500h11" stroke="#8dbdec" strokeWidth="2.600" /></Icon>
        <Label w={119} className="ml-[5px]">Add To Source Control</Label>
        <Chevron s={7} className="ml-[4px]" />
        <Label w={119} className="mr-[11px] ml-[18px]">VB, Windows - Legacy</Label>
      </div>
    </div>
  );
}

function StudioWindow() {
  return (
    <div className="flex h-[1040px] flex-col border-b border-[#1976d2]">
      <div className="flex h-[1039px] flex-col border-[5px] border-t-0 border-[#8bbf26] text-[11.700px] text-[#111]">
        <TitleBar />
        <Ribbon />
        <div className="flex h-[910px] shrink-0 bg-[#f4f6f6]">
          <div className="flex w-[27px] shrink-0 flex-col items-center gap-[4px] pt-[7px] pr-[5px] text-[#777]">
            <Icon><path d="M.7 1h11v8h-11zM3 9v2h11V4M12 4h2M6 11.500c0 3 9 3 9.500-2V6" strokeWidth="1.300" /></Icon>
            <span className="text-[12px] leading-[14px] text-[#4a4a4a] [writing-mode:vertical-rl]">Snippets</span>
          </div>
          <ActivitiesPanel />
          <DocumentArea />
          <PropertiesPanel />
          <div className="flex w-[28px] shrink-0 flex-col items-center gap-[4px] pt-[6px] pl-[6px] text-[#777]">
            <Icon><path d="M0 0h3v3H0zM6 4h4v3H6zM13 0h3v3h-3z" fill="currentColor" stroke="none" /><path d="M1.500 4v8M5.500 8v8M10.500 8v8M14.500 4v8" strokeWidth="1.600" /></Icon>
            <span className="text-[12px] leading-[14px] text-[#4a4a4a] [writing-mode:vertical-rl]">Outline</span>
          </div>
        </div>
        <StatusBar />
      </div>
    </div>
  );
}

export default function App() {
  return (
    <div className="h-[768px] w-[4096px] overflow-hidden bg-black">
      <div className="flex h-[1080px] w-[5760px] bg-black font-['Open_Sans','Noto_Sans',sans-serif] text-[11.700px] leading-[14px] [zoom:0.711111]">
        <div className="w-[1920px] shrink-0">
          <SideTaskbar />
          <div className="flex">
            <Desktop />
            <RecorderBar />
          </div>
        </div>
        <div className="w-[1920px] shrink-0">
          <MainTaskbar />
          <StudioWindow />
        </div>
        <div className="w-[1920px] shrink-0">
          <SideTaskbar />
        </div>
      </div>
    </div>
  );
}
